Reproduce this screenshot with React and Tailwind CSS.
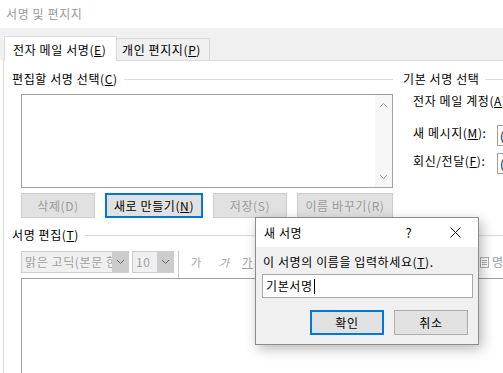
import React from 'react';

const font = { fontFamily: '"Noto Sans CJK KR", "Noto Sans", sans-serif' };

const GroupHeader = ({ children, lineClass = '' }) => (
  <div className="flex h-[16px] items-center leading-[16px]">
    <span className="whitespace-nowrap">{children}</span>
    <div className={`ml-[6px] h-px flex-1 bg-[#dcdcdc] ${lineClass}`} />
  </div>
);

const Chevron = ({ up, color = '#a0a0a0' }) => (
  <svg width="9" height="6" viewBox="0 0 9 6">
    <polyline
      points={up ? '1,5 4.5,1.5 8,5' : '1,1 4.5,4.5 8,1'}
      fill="none"
      stroke={color}
      strokeWidth="1"
    />
  </svg>
);

const Btn = ({ children, w, primary, disabled }) => (
  <div
    className={`flex h-[25px] shrink-0 items-center justify-center bg-[#e1e1e1] leading-[16px] whitespace-nowrap ${w} ${
      primary ? 'border-2 border-[#0078d7]' : disabled ? 'border border-[#cccccc] text-[#9a9a9a]' : 'border border-[#adadad]'
    } ${disabled ? 'bg-[#cccccc]/60' : ''}`}
  >
    {children}
  </div>
);

const Combo = ({ text, w }) => (
  <div className={`flex h-[22px] shrink-0 border border-[#cccccc] bg-[#f0f0f0] ${w}`}>
    <div className="flex-1 overflow-hidden whitespace-nowrap pl-[3px] leading-[20px] text-[#a0a0a0]">{text}</div>
    <div className="flex w-[16px] items-center justify-center bg-[#cccccc]">
      <Chevron color="#606060" />
    </div>
  </div>
);

export default function App() {
  return (
    <div className="relative h-[373px] w-[503px] overflow-hidden bg-white text-[12px] tracking-[0.6px] text-black" style={font}>
      {/* window title */}
      <div className="flex h-[28px] items-center pl-[6px] text-[#999999]">서명 및 편지지</div>

      {/* tabs */}
      <div className="flex h-[32px] items-end bg-[#f0f0f0] pl-[4px]">
        <div className="relative z-10 -mb-px flex h-[25px] w-[113px] items-start border-x border-t border-[#d9d9d9] bg-white pl-[8px] pt-[5px] leading-[16px] whitespace-nowrap">
          전자 메일 서명(<u>E</u>)
        </div>
        <div className="flex h-[22px] w-[93px] items-center border-r border-t border-[#d9d9d9] bg-[#f0f0f0] pl-[5px] leading-[16px] whitespace-nowrap">
          개인 편지지(<u>P</u>)
        </div>
      </div>

      {/* panel */}
      <div className="ml-[3px] h-[313px] border-l border-t border-[#d9d9d9] bg-white pl-[8px] pt-[10px]">
        <div className="flex">
          {/* left column */}
          <div className="flex w-[381px] shrink-0 flex-col">
            <GroupHeader>
              편집할 서명 선택(<u>C</u>)
            </GroupHeader>
            <div className="ml-[9px] mt-[7px] flex h-[94px] border border-[#a0a0a0] bg-white">
              <div className="flex-1" />
              <div className="flex w-[17px] flex-col items-center justify-between bg-[#f7f7f7] py-[7px]">
                <Chevron up />
                <Chevron />
              </div>
            </div>
            <div className="ml-[9px] mt-[5px] flex gap-[10px]">
              <Btn w="w-[74px]" disabled>삭제(D)</Btn>
              <Btn w="w-[98px]" primary>
                새로 만들기(<u>N</u>)
              </Btn>
              <Btn w="w-[74px]" disabled>저장(S)</Btn>
              <Btn w="w-[96px]" disabled>이름 바꾸기(R)</Btn>
            </div>
          </div>

          {/* right column */}
          <div className="ml-[10px] flex min-w-0 flex-1 flex-col">
            <GroupHeader lineClass="ml-[4px]">기본 서명 선택</GroupHeader>
            <div className="mt-[6px] pl-[10px] leading-[16px] whitespace-nowrap">
              전자 메일 계정(<u>A</u>)
            </div>
            <div className="mt-[16px] flex h-[21px] items-center pl-[10px]">
              <div className="-mt-[6px] w-[84px] shrink-0 whitespace-nowrap leading-[16px]">
                새 메시지(<u>M</u>):
              </div>
              <div className="h-[21px] w-[120px] shrink-0 border border-[#a0a0a0] pl-[2px] leading-[19px]">(없음)</div>
            </div>
            <div className="mt-[7px] flex h-[21px] items-center pl-[10px]">
              <div className="-mt-[6px] w-[84px] shrink-0 whitespace-nowrap leading-[16px]">
                회신/전달(<u>F</u>):
              </div>
              <div className="h-[21px] w-[120px] shrink-0 border border-[#a0a0a0] pl-[2px] leading-[19px]">(없음)</div>
            </div>
          </div>
        </div>

        {/* edit section */}
        <div className="mt-[9px]">
          <div className="flex h-[16px] items-center leading-[16px]">
            <span className="whitespace-nowrap">
              서명 편집(<u>T</u>)
            </span>
            <div className="ml-[6px] h-px flex-1 bg-[#dcdcdc]" />
          </div>
          <div className="ml-[9px] mt-[8px] flex h-[22px] items-center">
            <Combo text="맑은 고딕(본문 한글)" w="w-[108px]" />
            <div className="ml-[3px] shrink-0">
              <Combo text="10" w="w-[42px]" />
            </div>
            <div className="ml-[4px] h-[27px] w-px shrink-0 self-start bg-[#c8c8c8]" />
            <div className="ml-[12px] w-[14px] shrink-0 text-[11px] text-[#a0a0a0]">가</div>
            <div className="ml-[14px] w-[14px] shrink-0 text-[11px] italic text-[#a0a0a0]">가</div>
            <div className="ml-[9px] w-[14px] shrink-0 text-[11px] text-[#a0a0a0] underline">가</div>
            <div className="ml-[224px] flex shrink-0 items-center whitespace-nowrap text-[#a0a0a0]">
              <svg width="9" height="11" viewBox="0 0 9 11" className="mr-[3px]">
                <rect x="0.5" y="0.5" width="8" height="10" fill="none" stroke="#b0b0b0" />
                <line x1="2" y1="3.5" x2="7" y2="3.5" stroke="#b0b0b0" />
                <line x1="2" y1="5.5" x2="7" y2="5.5" stroke="#b0b0b0" />
                <line x1="2" y1="7.5" x2="7" y2="7.5" stroke="#b0b0b0" />
              </svg>
              명함
            </div>
          </div>
          <div className="ml-[9px] mt-[5px] h-[120px] w-[520px] border border-[#a0a0a0] bg-white" />
        </div>
      </div>

      {/* new signature dialog */}
      <div className="absolute left-[255px] top-[217px] flex h-[128px] w-[224px] flex-col border border-[#8c8c8c] bg-[#f0f0f0] shadow-[3px_4px_12px_rgba(0,0,0,0.28)]">
        <div className="flex h-[29px] items-center bg-white">
          <div className="flex-1 pl-[8px] leading-[16px]">새 서명</div>
          <div className="flex w-[46px] justify-center text-[13px] leading-[16px]">?</div>
          <div className="flex w-[46px] justify-center">
            <svg width="11" height="11" viewBox="0 0 11 11">
              <line x1="0.5" y1="0.5" x2="10.5" y2="10.5" stroke="#111" strokeWidth="1" />
              <line x1="10.5" y1="0.5" x2="0.5" y2="10.5" stroke="#111" strokeWidth="1" />
            </svg>
          </div>
        </div>
        <div className="flex flex-1 flex-col px-[6px] pt-[7px]">
          <div className="pl-px leading-[16px] whitespace-nowrap">
            이 서명의 이름을 입력하세요(<u>T</u>).
          </div>
          <div className="mt-[4px] flex h-[24px] w-[211px] items-center border border-[#a9a9a9] bg-white pl-[3px]">
            <span className="leading-[16px]">기본서명</span>
            <span className="ml-px h-[15px] w-px bg-black" />
          </div>
          <div className="mt-[12px] flex justify-end gap-[10px] pr-[4px]">
            <div className="flex h-[25px] w-[74px] items-center justify-center border-2 border-[#0078d7] bg-[#e1e1e1] leading-[16px]">
              확인
            </div>
            <div className="flex h-[25px] w-[74px] items-center justify-center border border-[#adadad] bg-[#e1e1e1] leading-[16px]">
              취소
            </div>
          </div>
        </div>
      </div>
    </div>
  );
}
